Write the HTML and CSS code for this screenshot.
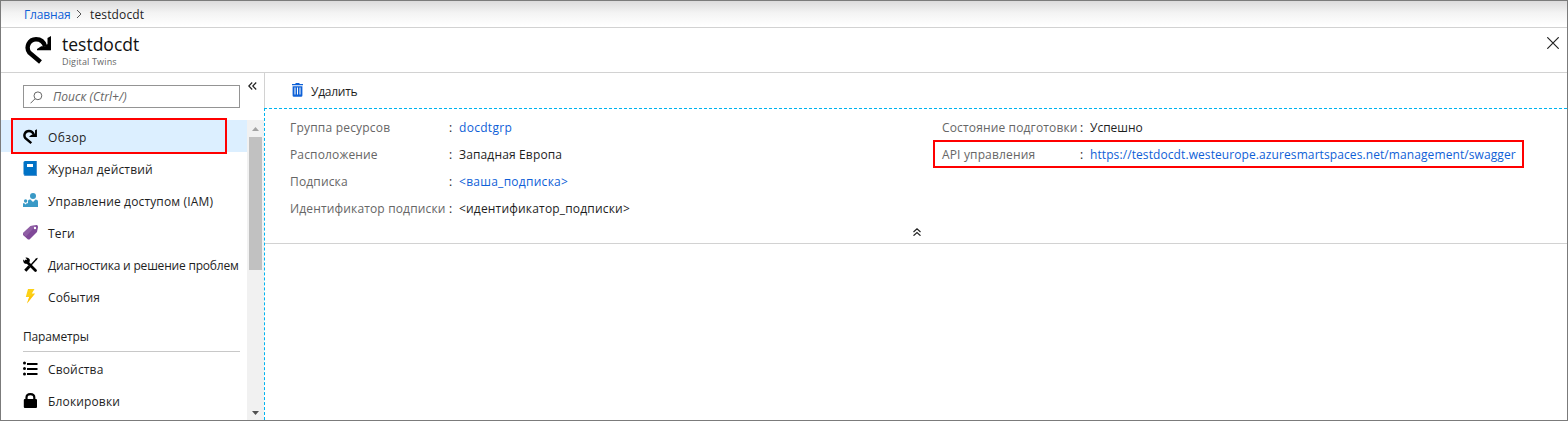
FILE: index.html
```
<!DOCTYPE html>
<html lang="ru">
<head>
<meta charset="utf-8">
<title>testdocdt</title>
<link rel="stylesheet" href="styles.css">
</head>
<body>
<div class="window">
  <nav class="crumbs">
    <a class="crumb-home">Главная</a>
    <svg class="crumb-sep" width="6" height="10" viewBox="0 0 6 10"><path d="M1 1l4 4-4 4" fill="none" stroke="#555"/></svg>
    <span class="crumb-current">testdocdt</span>
  </nav>
  <header class="header">
    <svg class="logo" width="28" height="29" viewBox="0 0 28 29"><path d="M15.500 26 4.500 16.800C.3 11.500 3.800 3.200 11 3.200c5 0 8 3 9.200 7.300" fill="none" stroke="#000" stroke-width="4.400"/><path d="M26 0v14.300H12V13l4.200-2.700h4L22.500 8V2z"/></svg>
    <div class="titles">
      <h1 class="title">testdocdt</h1>
      <div class="subtitle">Digital Twins</div>
    </div>
    <svg class="close" width="12" height="12" viewBox="0 0 12 12"><path d="M.3.3l11.400 11.400M11.700.3L.3 11.700" stroke="#222" stroke-width="1.200"/></svg>
  </header>
  <div class="body">
    <aside class="sidebar">
      <div class="search-row">
        <div class="search">
          <svg width="13" height="13" viewBox="0 0 13 13"><g fill="none" stroke="#666"><circle cx="7.900" cy="4.800" r="3.900"/><path d="M5 7.800.5 12.300"/></g></svg>
          <span class="placeholder">Поиск (Ctrl+/)</span>
        </div>
        <svg class="collapse" width="9" height="8" viewBox="0 0 9 8"><path d="M4.200.5.8 4l3.400 3.500M8.200.5 4.800 4l3.400 3.500" fill="none" stroke="#222" stroke-width="1.200"/></svg>
      </div>
      <div class="menu-area">
        <div class="menu">
          <div class="item selected"><svg width="15" height="16" viewBox="0 0 28 29"><path d="M15.500 26 4.500 16.800C.3 11.500 3.800 3.200 11 3.200c5 0 8 3 9.200 7.300" fill="none" stroke="#000" stroke-width="4.600"/><path d="M26 0v14.300H12V13l4.200-2.700h4L22.500 8V2z"/></svg><span class="t-overview">Обзор</span></div>
          <div class="item"><svg width="15" height="16" viewBox="0 0 15 16"><path fill="#0072c6" d="M2 0h11v14H2q-1.500 0-1.500-1.500v-11Q.5 0 2 0z"/><path fill="#4b92cf" d="M13 0h1v15H1.500L.5 13.500 2 14h11z"/><path fill="#fff" d="M4 3h6v3H4z"/></svg><span class="t-log">Журнал действий</span></div>
          <div class="item"><svg width="15" height="16" viewBox="0 0 15 16"><g fill="#3999c6"><circle cx="10" cy="3" r="3"/><path d="M5 14V8q0-1.500 1.500-1.500h1L10 9l2.500-2.500q2.500 0 2.500 2V14z"/><circle cx="2.600" cy="8" r="1.700"/><path d="M0 14v-3q0-1 1-1l1.600 1.500L4 10l1 .5V14z"/></g></svg><span class="t-iam">Управление доступом (IAM)</span></div>
          <div class="item"><svg width="15" height="16" viewBox="0 0 15 16"><path fill="#804998" d="m0 8 7.500-7 6-1q1.500 0 1.500 2L14 7l-7.500 7.500H5L0 10z"/><path fill="#a277b3" d="m0 8 7.500-7 6-1L3 11.500 0 9z" opacity=".45"/><circle cx="12" cy="3" r="1.200" fill="#fff"/></svg><span class="t-tags">Теги</span></div>
          <div class="item"><svg width="15" height="16" viewBox="0 0 15 16"><path d="M3 4 12.500 13.500" stroke="#000" stroke-width="2.800" stroke-linecap="round"/><path d="M.2 2.500 2 4.300 3.800 4 4 2.300 2.300.7Q5-.1 6.500 2q1 2-.7 4Q3 7.700 1 6 0 5 .2 2.500z"/><path d="M13.500 2 8 8" stroke="#000" stroke-width="1.400"/><path d="m12.300 2 2-1.200.4.400-1.100 2z"/><path d="M6.500 9.200 2.300 13.700" stroke="#000" stroke-width="3"/></svg><span class="t-diag">Диагностика и решение проблем</span></div>
          <div class="item"><svg width="15" height="16" viewBox="0 0 15 16"><path fill="#fcd116" d="M5 0h6.500L8.800 4.500H12L4 14.500l2.200-6.500H2.800z"/><path fill="#ffb900" d="M12 4.500 4 14.500l2.200-6.500z" opacity=".6"/></svg><span class="t-events">События</span></div>
          <div class="section">Параметры</div>
          <div class="item"><svg width="15" height="16" viewBox="0 0 15 16"><circle cx="1.500" cy="2" r="1.500"/><circle cx="1.500" cy="7.500" r="1.500"/><circle cx="1.500" cy="13" r="1.500"/><path d="M4 3h10.500M4 8h10.500M4 13h10.500" stroke="#000" stroke-width="2"/></svg><span class="t-props">Свойства</span></div>
          <div class="item"><svg width="15" height="16" viewBox="0 0 15 16"><rect x=".8" y="6" width="13.200" height="9" rx="1"/><path d="M3.500 7V4.500Q3.500 1.100 7.400 1.100T11.300 4.500V7" fill="none" stroke="#000" stroke-width="2.200"/></svg><span class="t-locks">Блокировки</span></div>
        </div>
        <div class="scrollbar">
          <svg width="7" height="4" viewBox="0 0 7 4"><path fill="#a3a3a3" d="M0 4 3.500 0 7 4z"/></svg>
          <div class="thumb"></div>
          <svg class="down" width="7" height="4" viewBox="0 0 7 4"><path fill="#505050" d="M0 0h7L3.500 4z"/></svg>
        </div>
        <div class="mark mark-menu"></div>
      </div>
    </aside>
    <main class="main">
      <div class="toolbar">
        <svg width="11" height="14" viewBox="0 0 11 14"><path fill="#0f62d8" d="M3.500 0h4v1H11v1.300H0V1h3.500zM.6 3.300h9.800V12.500q0 1.300-1.300 1.300H1.900q-1.300 0-1.300-1.300z"/><path d="M3 4.500v7M5.500 4.500v7M8 4.500v7" stroke="#fff"/></svg>
        <span class="t-delete">Удалить</span>
      </div>
      <div class="content">
        <div class="essentials">
          <dl class="props props-left">
            <dt class="l-group">Группа ресурсов</dt><dd>:</dd><dd class="link v-group">docdtgrp</dd>
            <dt class="l-loc">Расположение</dt><dd>:</dd><dd class="v-loc">Западная Европа</dd>
            <dt class="l-sub">Подписка</dt><dd>:</dd><dd class="link v-sub">&lt;ваша_подписка&gt;</dd>
            <dt class="l-id">Идентификатор подписки</dt><dd>:</dd><dd class="v-id">&lt;идентификатор_подписки&gt;</dd>
          </dl>
          <dl class="props props-right">
            <dt class="l-state">Состояние подготовки</dt><dd>:</dd><dd class="v-state">Успешно</dd>
            <dt class="l-api">API управления</dt><dd>:</dd><dd class="link v-api">https://testdocdt.westeurope.azuresmartspaces.net/management/swagger</dd>
          </dl>
          <div class="mark mark-api"></div>
        </div>
        <div class="fold"><svg width="8" height="8" viewBox="0 0 8 8"><path d="M.5 4 4 .8 7.500 4M.5 7.700 4 4.500l3.500 3.200" fill="none" stroke="#222" stroke-width="1.200"/></svg></div>
      </div>
    </main>
  </div>
</div>
</body>
</html>
```
FILE: styles.css
```
* { box-sizing: border-box; }
body { margin: 0; background: #fff; font-family: "Open Sans", "Noto Sans", sans-serif; font-size: 12px; color: #1e1e1e; white-space: nowrap; }
svg { display: block; flex: none; }
.window { height: 421px; border: 1px solid #7b7b7b; display: flex; flex-direction: column; overflow: hidden; }
.crumbs { height: 27px; flex: none; display: flex; align-items: center; padding-left: 23px; border-bottom: 1px solid #d2d2d2; background: linear-gradient(#dcdbdc, #f3f3f3 45%, #fff 95%); }
.crumb-home { width: 47px; letter-spacing: -.15px; }
.crumb-sep { margin: 0 8px 0 5px; }
.crumb-current { letter-spacing: .15px; }
.crumb-home, .link { color: #0f5fd7; }
.header { height: 45px; flex: none; display: flex; border-bottom: 1px solid #d2d2d2; padding: 7px 8px 0 23px; }
.logo { margin: 1px 9px 0 1px; }
.titles { flex: 1; }
.title { margin: 0; font-size: 17.5px; line-height: 18px; font-weight: 500; color: #111; }
.subtitle { font-size: 9px; line-height: 12px; margin-top: 3px; color: #666; letter-spacing: .15px; }
.close { margin-top: 2px; }
.body { flex: 1; min-height: 0; display: flex; }
.sidebar { width: 263px; flex: none; display: flex; flex-direction: column; }
.search-row { height: 47px; flex: none; display: flex; padding: 12px 0 0 22px; }
.search { width: 217px; height: 23px; border: 1px solid #949494; display: flex; align-items: center; padding-left: 6px; }
.search svg { margin-top: 1px; }
.placeholder { margin-left: 10px; font-style: italic; color: #666; letter-spacing: .07px; }
.collapse { margin: -3px 0 0 8px; }
.menu-area { flex: 1; min-height: 0; display: flex; position: relative; }
.menu { flex: 1; overflow: hidden; }
.item { height: 32px; display: flex; align-items: center; padding-left: 22px; gap: 10px; letter-spacing: .15px; }
.item svg { margin-top: 2px; }
.item span { padding-top: 2px; }
.t-overview { letter-spacing: .4px; }
.t-diag { letter-spacing: -.2px; }
.selected { background: #dcefff; }
.section { margin: 9px 7px 0 22px; height: 31px; padding-top: 8px; line-height: 16px; border-bottom: 1px solid #c8c8c8; letter-spacing: -.15px; }
.scrollbar { width: 17px; background: #f1f1f1; display: flex; flex-direction: column; align-items: center; padding: 7px 0 5px; }
.thumb { width: 13px; height: 133px; margin-top: 6px; background: #c1c1c1; }
.down { margin-top: auto; }
.mark { position: absolute; border: 2px solid #f00; }
.mark-menu { left: 10px; top: -2px; width: 216px; height: 36px; }
.main { flex: 1; min-width: 0; display: flex; flex-direction: column; }
.toolbar { height: 35px; flex: none; border-left: 1px solid #d2d2d2; display: flex; align-items: center; padding: 0 0 1px 27px; gap: 8px; }
.toolbar span { padding-top: 2px; letter-spacing: -.25px; }
.content { flex: 1; border-top: 1px dashed #00b4ef; border-left: 1px dashed #00b4ef; }
.essentials { height: 116px; display: flex; position: relative; padding: 5px 0 0 25px; }
.props { margin: 0; display: grid; grid-auto-rows: 27px; line-height: 27px; align-content: start; letter-spacing: .15px; }
.props-left { width: 652px; grid-template-columns: 159px 10px 1fr; }
.props-right { grid-template-columns: 138px 10px 1fr; }
dt { color: #666; }
dd { margin: 0; }
.l-group { letter-spacing: .2px; }
.v-group { letter-spacing: .3px; }
.v-sub { letter-spacing: .27px; }
.v-id { letter-spacing: .18px; }
.v-state { letter-spacing: 0; }
.v-api { letter-spacing: .09px; }
.mark-api { left: 668px; top: 31px; width: 591px; height: 28px; }
.fold { height: 19px; border-bottom: 1px solid #d2d2d2; display: flex; justify-content: center; padding: 3px 0 0 2px; }
```
